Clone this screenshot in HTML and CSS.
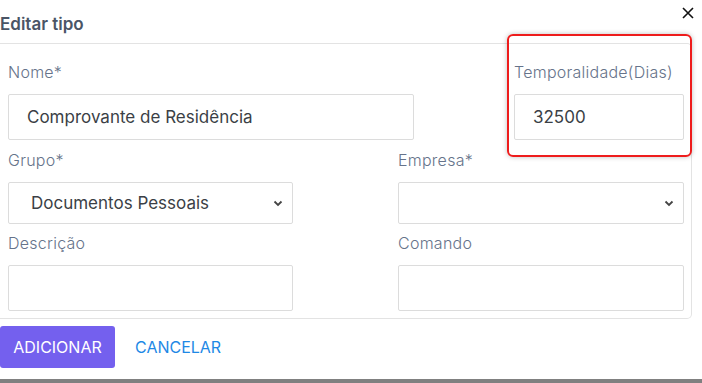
FILE: index.html
```html
<!DOCTYPE html>
<html>
<head>
  <meta charset="UTF-8">
  <title>Editar tipo</title>
  <link rel="stylesheet" href="styles.css">
</head>
<body>

  <div class="modal">
    <div class="modal-header">
      <h3 class="modal-title">Editar tipo</h3>
      <button type="button" class="close-btn" aria-label="Fechar">
        <svg width="12" height="12" viewBox="0 0 12 12">
          <path d="M1 1 L11 11 M11 1 L1 11" stroke="#111" stroke-width="1.6" fill="none" />
        </svg>
      </button>
    </div>

    <form class="card">
      <div class="row row-top">
        <div class="form-group">
          <label for="nome">Nome*</label>
          <input id="nome" type="text" value="Comprovante de Residência" />
        </div>
        <div class="form-group highlight">
          <label for="temporalidade">Temporalidade(Dias)</label>
          <input id="temporalidade" type="text" value="32500" />
        </div>
      </div>

      <div class="row row-mid">
        <div class="form-group">
          <label for="grupo">Grupo*</label>
          <div class="select">
            <span>Documentos Pessoais</span>
            <svg width="10" height="7" viewBox="0 0 10 7"><path d="M1.5 1.5 L5 5 L8.5 1.5" stroke="#444" stroke-width="1.8" fill="none" /></svg>
          </div>
        </div>
        <div class="form-group">
          <label for="empresa">Empresa*</label>
          <div class="select">
            <span></span>
            <svg width="10" height="7" viewBox="0 0 10 7"><path d="M1.5 1.5 L5 5 L8.5 1.5" stroke="#444" stroke-width="1.8" fill="none" /></svg>
          </div>
        </div>
      </div>

      <div class="row">
        <div class="form-group">
          <label for="descricao">Descrição</label>
          <input id="descricao" type="text" />
        </div>
        <div class="form-group">
          <label for="comando">Comando</label>
          <input id="comando" type="text" />
        </div>
      </div>
    </form>

    <div class="actions">
      <button type="button" class="add-btn">Adicionar</button>
      <button type="button" class="cancel-btn">Cancelar</button>
    </div>
  </div>

  <div class="bottom-bar"></div>

</body>
</html>
```

FILE: styles.css
```css
body {
  margin: 0;
  background-color: #fff;
  font-family: Inter, Roboto, "Noto Sans", Arial, sans-serif;
  width: 702px;
  height: 383px;
  overflow: hidden;
  display: flex;
  flex-direction: column;
}

.modal {
  flex: 1;
}

.modal-header {
  display: flex;
  justify-content: space-between;
  align-items: flex-start;
  height: 43px;
}

.modal-title {
  margin: 14px 0 0 0;
  font-size: 17px;
  font-weight: 600;
  color: #4a5566;
  letter-spacing: 0;
}

.close-btn {
  background: none;
  border: none;
  padding: 0;
  margin: 7px 8px 0 0;
  width: 12px;
  height: 12px;
  cursor: pointer;
}

.card {
  width: 692px;
  height: 276px;
  box-sizing: border-box;
  border: 1px solid #e3e3e3;
  border-left: none;
  border-radius: 0 5px 5px 0;
  padding: 15px 8px 0 8px;
}

.row {
  display: grid;
  grid-template-columns: 285px 286px;
  column-gap: 105px;
}

.row-top {
  grid-template-columns: 406px 170px;
  column-gap: 100px;
  margin-bottom: 7px;
}

.row-mid {
  margin-bottom: 6px;
}

.form-group {
  position: relative;
}

label {
  display: block;
  font-size: 16px;
  font-weight: 300;
  letter-spacing: 0.25px;
  color: #66738a;
  height: 23px;
  padding-top: 3px;
  margin-bottom: 9px;
  white-space: nowrap;
}

input, .select {
  width: 100%;
  height: 46px;
  box-sizing: border-box;
  border: 1px solid #dcdcdc;
  border-radius: 2px;
  padding: 0 18px;
  font-family: inherit;
  font-size: 17px;
  color: #3b3f46;
  background: #fff;
}

.select {
  height: 42px;
  display: flex;
  align-items: center;
  justify-content: space-between;
  padding: 0 9px 0 22px;
}

.highlight::before {
  content: "";
  position: absolute;
  left: -7px;
  top: -25px;
  right: -8px;
  bottom: -17px;
  border: 2px solid #ee1c1c;
  border-radius: 6px;
  box-shadow: 0 0 5px rgba(0, 0, 0, 0.25);
  pointer-events: none;
}

.actions {
  display: flex;
  align-items: center;
  gap: 20px;
  margin-top: 7px;
}

.add-btn {
  width: 115px;
  height: 42px;
  background-color: #7460ee;
  color: white;
  border: none;
  border-radius: 3px;
  font-family: inherit;
  font-size: 16px;
  text-transform: uppercase;
  cursor: pointer;
}

.cancel-btn {
  background: none;
  border: none;
  padding: 0;
  color: #1e88e5;
  font-family: inherit;
  font-size: 16px;
  text-transform: uppercase;
  cursor: pointer;
}

.bottom-bar {
  height: 4px;
  background-color: #808080;
}
```
